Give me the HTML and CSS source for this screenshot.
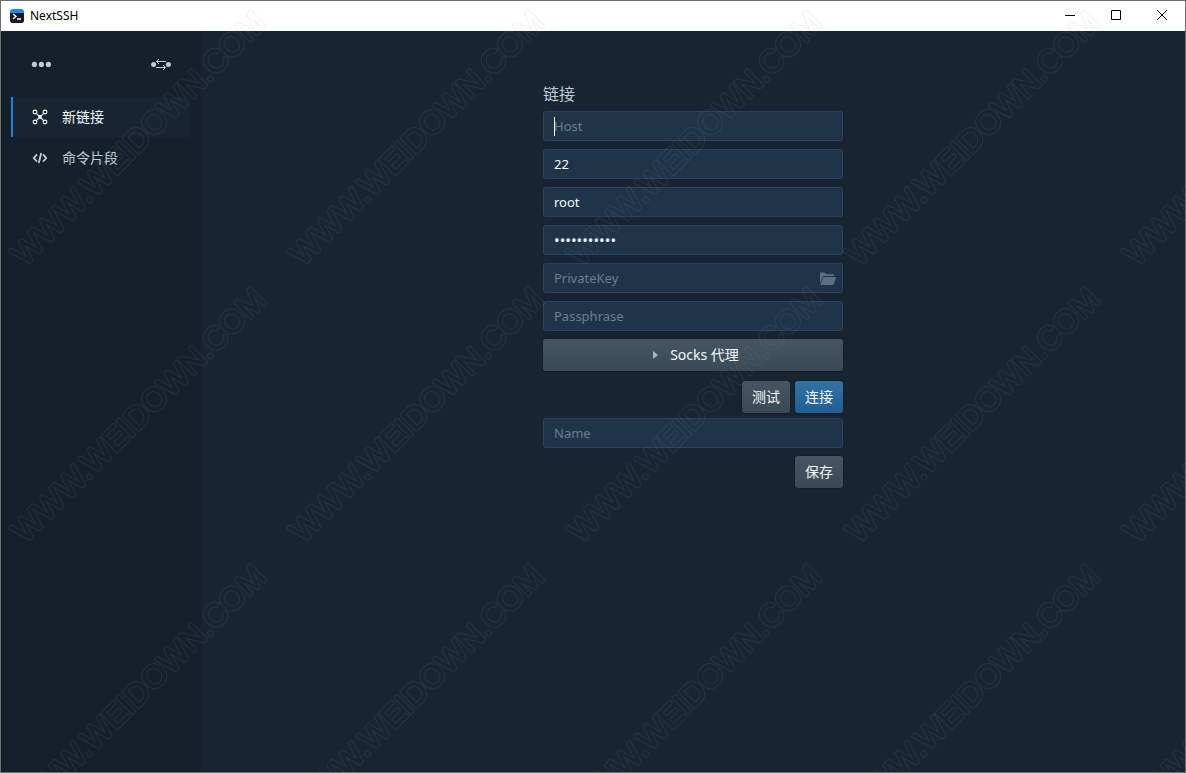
FILE: index.html
```
<!DOCTYPE html>
<html lang="zh-CN">
<head>
	<meta charset="utf-8">
	<title>NextSSH</title>
	<link rel="stylesheet" href="styles.css">
</head>
<body>
	<div class="window">
		<header class="titlebar">
			<svg class="logo" viewBox="0 0 14 14">
				<rect width="14" height="14" rx="3" fill="#1a8cff"/>
				<path d="M0 4h14v7a3 3 0 0 1-3 3H3a3 3 0 0 1-3-3z" fill="#191b20"/>
				<path d="M3 5l3 2.5-3 2.2M7 10h4" fill="none" stroke="#fff" stroke-width="1.3"/>
			</svg>
			<span class="title">NextSSH</span>
			<button class="winbtn" aria-label="Minimize"><svg viewBox="0 0 12 12"><path d="M1 5.5h10"/></svg></button>
			<button class="winbtn" aria-label="Maximize"><svg viewBox="0 0 12 12"><path d="M1.5 .5h9v9h-9z"/></svg></button>
			<button class="winbtn" aria-label="Close"><svg viewBox="0 0 12 12"><path d="M1 0l10 10M11 0L1 10"/></svg></button>
		</header>

		<div class="body">
			<aside class="sidebar">
				<div class="tools">
					<button class="tool" aria-label="Menu">
						<svg width="20" height="16" viewBox="0 0 20 16" fill="currentColor">
							<circle cx="3.4" cy="8.4" r="2.6"/><circle cx="10.4" cy="8.4" r="2.6"/><circle cx="17.4" cy="8.4" r="2.6"/>
						</svg>
					</button>
					<button class="tool" aria-label="Transfer">
						<svg width="20" height="16" viewBox="0 0 20 16" fill="currentColor">
							<circle cx="2.6" cy="8.4" r="2.5"/><circle cx="17.4" cy="8.4" r="2.5"/>
							<path d="M15 5.5H5.5M8 3L5.5 5.5 8 8M5 11.5h9.5M12 9l2.5 2.5-2.5 2.5" fill="none" stroke="currentColor"/>
						</svg>
					</button>
				</div>
				<nav class="menu">
					<a class="item active" href="#new">
						<svg width="16" height="16" viewBox="0 0 16 16" fill="none" stroke="currentColor" stroke-width="1.1">
							<circle cx="3" cy="3" r="1.9"/><circle cx="13" cy="3" r="1.9"/>
							<circle cx="3" cy="13" r="1.9"/><circle cx="13" cy="13" r="1.9"/>
							<path d="M4.3 4.3l7.4 7.4M11.7 4.3l-7.4 7.4"/>
							<circle cx="8" cy="8" r="1.9" fill="currentColor" stroke="none"/>
						</svg>
						新链接
					</a>
					<a class="item" href="#snippets">
						<svg width="16" height="16" viewBox="0 0 16 16" fill="none" stroke="currentColor" stroke-width="1.8">
							<path d="M5 4.3L1.8 8 5 11.7M11 4.3L14.2 8 11 11.7M9.2 3L6.8 13"/>
						</svg>
						命令片段
					</a>
				</nav>
			</aside>

			<main class="content">
				<form class="form">
					<h1>链接</h1>
					<input class="field caret" type="text" placeholder="Host" aria-label="Host">
					<input class="field" type="text" value="22" aria-label="Port">
					<input class="field" type="text" value="root" aria-label="User">
					<input class="field password" type="password" value="12345678901" aria-label="Password">
					<div class="group">
						<input class="field" type="text" placeholder="PrivateKey" aria-label="PrivateKey">
						<button class="open" type="button" aria-label="Open file">
							<svg width="16" height="16" viewBox="0 0 16 16" fill="currentColor">
								<path d="M0 12.4V2.2c0-.5.3-.7.8-.7h4l1.7 1.8H13c.6 0 1 .4 1 1V5H4.2c-.6 0-1 .3-1.2.8z"/>
								<path d="M4.3 6H15.4c.5 0 .7.3.5.8l-2.2 6.4c-.2.5-.5.8-1 .8H1c-.5 0-.7-.3-.5-.8l2.7-6.5c.2-.4.6-.7 1.1-.7z"/>
							</svg>
						</button>
					</div>
					<input class="field" type="text" placeholder="Passphrase" aria-label="Passphrase">
					<button class="btn socks" type="button">
						<svg width="16" height="16" viewBox="0 0 16 16" fill="#a7b6c2"><path d="M6 5v8l5-4z"/></svg>
						Socks 代理
					</button>
					<div class="actions">
						<button class="btn" type="button">测试</button>
						<button class="btn primary" type="button">连接</button>
					</div>
					<input class="field" type="text" placeholder="Name" aria-label="Name">
					<div class="save">
						<button class="btn" type="button">保存</button>
					</div>
				</form>
			</main>
		</div>
	</div>

	<svg class="watermark" aria-hidden="true">
		<defs>
			<!-- thick letters minus slightly thinner ones leave a rounded outline -->
			<mask id="outline" maskUnits="userSpaceOnUse" x="0" y="0" width="278" height="277">
				<text class="outer" x="25" y="267" transform="rotate(-45 25 267)">WWW.WEIDOWN.COM</text>
				<text class="inner" x="25" y="267" transform="rotate(-45 25 267)">WWW.WEIDOWN.COM</text>
			</mask>
			<pattern id="mark" width="278" height="277" patternUnits="userSpaceOnUse">
				<rect class="ink" width="278" height="277" mask="url(#outline)"/>
			</pattern>
		</defs>
		<rect width="100%" height="100%" fill="url(#mark)"/>
	</svg>
</body>
</html>
```

FILE: styles.css
```
* {
	box-sizing: border-box;
}
body {
	margin: 0;
	font-family: "Noto Sans", "Noto Sans CJK SC", sans-serif;
	font-size: 14px;
	color: #bfccd6;
}
button, input {
	font: inherit;
}
button {
	border: none;
	cursor: pointer;
}
svg {
	display: block;
}

/* window frame */
.window {
	display: flex;
	flex-direction: column;
	min-height: 100vh;
	border: 1px solid #6e6e6e;
	background: #192433;
}
.titlebar {
	display: flex;
	align-items: center;
	height: 30px;
	padding-left: 9px;
	background: #fff;
	color: #000;
	font-size: 12px;
}
.logo {
	width: 14px;
	height: 14px;
}
.title {
	flex: 1;
	margin-left: 6px;
	line-height: 16px;
}
.winbtn {
	display: flex;
	align-items: center;
	justify-content: center;
	width: 46px;
	height: 30px;
	padding: 0;
	background: none;
}
.winbtn svg {
	width: 12px;
	height: 12px;
	fill: none;
	stroke: #000;
}
.body {
	display: flex;
	flex: 1;
}

/* sidebar */
.sidebar {
	width: 200px;
	padding: 18px 10px;
	background: #16202b;
}
.tools {
	display: flex;
	justify-content: space-between;
	padding: 0 20px;
	margin-bottom: 18px;
}
.tool {
	height: 30px;
	padding: 0;
	background: none;
	color: #bfccd6;
}
.menu {
	display: flex;
	flex-direction: column;
	gap: 1px;
}
.item {
	display: flex;
	align-items: center;
	gap: 14px;
	height: 40px;
	padding-left: 19px;
	border-left: 2px solid transparent;
	color: #bfccd6;
	line-height: 18px;
	text-decoration: none;
}
.item.active {
	background: #192433;
	border-left-color: #1b82d4;
	color: #f5f8fa;
}

/* connection form */
.content {
	flex: 1;
	padding-top: 54px;
}
.form {
	display: flex;
	flex-direction: column;
	gap: 8px;
	width: 300px;
	margin: 0 auto;
}
h1 {
	margin: 0;
	font-size: 16px;
	font-weight: normal;
	line-height: 18px;
}
.field {
	width: 100%;
	height: 30px;
	padding: 0 10px;
	border: 1px solid #2b4360;
	border-radius: 3px;
	outline: none;
	background: #203449;
	color: #f5f8fa;
	font-size: 13px;
}
.field::placeholder {
	color: #6c7d8e;
	opacity: 1;
}
.caret {
	background: linear-gradient(#fff, #fff) 10px center / 1px 19px no-repeat #203449;
}
.password {
	font-size: 15px;
}
.group {
	position: relative;
}
.open {
	position: absolute;
	top: 0;
	right: 0;
	height: 30px;
	padding: 2px 7px 0;
	background: none;
	color: #5c7080;
}
.btn {
	height: 32px;
	padding: 0 10px 2px;
	border-radius: 3px;
	background: linear-gradient(#455662, #394955);
	box-shadow: 0 0 0 1px rgba(16, 22, 26, 0.4);
	color: #f5f8fa;
}
.btn.primary {
	background: linear-gradient(#3372a3, #215f93);
}
.socks {
	display: flex;
	align-items: center;
	justify-content: center;
	gap: 7px;
}
.actions {
	display: flex;
	justify-content: flex-end;
	gap: 5px;
	padding-top: 2px;
	margin-bottom: -3px;
}
.save {
	display: flex;
	justify-content: flex-end;
}

/* tiled mark over the whole window */
.watermark {
	position: fixed;
	inset: 0;
	width: 100%;
	height: 100%;
	pointer-events: none;
}
.watermark text {
	font-family: "Liberation Sans", sans-serif;
	font-size: 32px;
	stroke-linejoin: round;
}
.outer {
	fill: #fff;
	stroke: #fff;
	stroke-width: 3px;
}
.inner {
	fill: #000;
	stroke: #000;
	stroke-width: 1px;
}
.ink {
	fill: #8c939b;
	opacity: 0.12;
}
```
